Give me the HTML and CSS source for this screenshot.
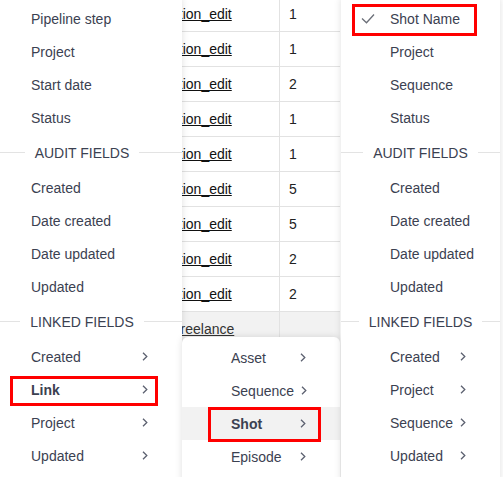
FILE: index.html
```html
<!DOCTYPE html>
<html lang="en">
<head>
<meta charset="utf-8">
<title>Field picker</title>
<link rel="stylesheet" href="styles.css">
</head>
<body>
<div class="stage">
  <div class="table">
    <div class="row"><div class="cell name"><span class="link">production_edit</span></div><div class="cell num">1</div></div>
    <div class="row"><div class="cell name"><span class="link">production_edit</span></div><div class="cell num">1</div></div>
    <div class="row"><div class="cell name"><span class="link">production_edit</span></div><div class="cell num">2</div></div>
    <div class="row"><div class="cell name"><span class="link">production_edit</span></div><div class="cell num">1</div></div>
    <div class="row"><div class="cell name"><span class="link">production_edit</span></div><div class="cell num">1</div></div>
    <div class="row"><div class="cell name"><span class="link">production_edit</span></div><div class="cell num">5</div></div>
    <div class="row"><div class="cell name"><span class="link">production_edit</span></div><div class="cell num">5</div></div>
    <div class="row"><div class="cell name"><span class="link">production_edit</span></div><div class="cell num">2</div></div>
    <div class="row"><div class="cell name"><span class="link">production_edit</span></div><div class="cell num">2</div></div>
    <div class="row group"><div class="cell name"><span class="link">Freelance</span></div><div class="cell num"></div></div>
    <div class="row"><div class="cell name"></div><div class="cell num"></div></div>
    <div class="row"><div class="cell name"></div><div class="cell num"></div></div>
    <div class="row"><div class="cell name"></div><div class="cell num"></div></div>
    <div class="row"><div class="cell name"></div><div class="cell num"></div></div>
  </div>

  <div class="menu menu-main">
    <div class="item"><span class="check"></span><span class="label">Pipeline step</span></div>
    <div class="item"><span class="check"></span><span class="label">Project</span></div>
    <div class="item"><span class="check"></span><span class="label">Start date</span></div>
    <div class="item"><span class="check"></span><span class="label">Status</span></div>
    <div class="section">Audit fields</div>
    <div class="item"><span class="check"></span><span class="label">Created</span></div>
    <div class="item"><span class="check"></span><span class="label">Date created</span></div>
    <div class="item"><span class="check"></span><span class="label">Date updated</span></div>
    <div class="item"><span class="check"></span><span class="label">Updated</span></div>
    <div class="section">Linked fields</div>
    <div class="item"><span class="check"></span><span class="label">Created</span><span class="chev"><svg width="6" height="9" viewBox="0 0 6 9"><path d="M1 .8 4.8 4.5 1 8.2" fill="none" stroke="#5c6170" stroke-width="1.3"/></svg></span></div>
    <div class="item bold"><span class="check"></span><span class="label">Link</span><span class="chev"><svg width="6" height="9" viewBox="0 0 6 9"><path d="M1 .8 4.8 4.5 1 8.2" fill="none" stroke="#5c6170" stroke-width="1.3"/></svg></span></div>
    <div class="item"><span class="check"></span><span class="label">Project</span><span class="chev"><svg width="6" height="9" viewBox="0 0 6 9"><path d="M1 .8 4.8 4.5 1 8.2" fill="none" stroke="#5c6170" stroke-width="1.3"/></svg></span></div>
    <div class="item"><span class="check"></span><span class="label">Updated</span><span class="chev"><svg width="6" height="9" viewBox="0 0 6 9"><path d="M1 .8 4.8 4.5 1 8.2" fill="none" stroke="#5c6170" stroke-width="1.3"/></svg></span></div>
  </div>

  <div class="menu menu-sub">
    <div class="item"><span class="check"></span><span class="label">Asset</span><span class="chev"><svg width="6" height="9" viewBox="0 0 6 9"><path d="M1 .8 4.8 4.5 1 8.2" fill="none" stroke="#5c6170" stroke-width="1.3"/></svg></span></div>
    <div class="item"><span class="check"></span><span class="label">Sequence</span><span class="chev"><svg width="6" height="9" viewBox="0 0 6 9"><path d="M1 .8 4.8 4.5 1 8.2" fill="none" stroke="#5c6170" stroke-width="1.3"/></svg></span></div>
    <div class="item bold active"><span class="check"></span><span class="label">Shot</span><span class="chev"><svg width="6" height="9" viewBox="0 0 6 9"><path d="M1 .8 4.8 4.5 1 8.2" fill="none" stroke="#5c6170" stroke-width="1.3"/></svg></span></div>
    <div class="item"><span class="check"></span><span class="label">Episode</span><span class="chev"><svg width="6" height="9" viewBox="0 0 6 9"><path d="M1 .8 4.8 4.5 1 8.2" fill="none" stroke="#5c6170" stroke-width="1.3"/></svg></span></div>
  </div>

  <div class="menu menu-fields">
    <div class="item"><span class="check"><svg width="14" height="11" viewBox="0 0 14 11"><path d="M1 5.5 5.5 9.8 13 1.5" fill="none" stroke="#6b6f78" stroke-width="1.3"/></svg></span><span class="label">Shot Name</span></div>
    <div class="item"><span class="check"></span><span class="label">Project</span></div>
    <div class="item"><span class="check"></span><span class="label">Sequence</span></div>
    <div class="item"><span class="check"></span><span class="label">Status</span></div>
    <div class="section">Audit fields</div>
    <div class="item"><span class="check"></span><span class="label">Created</span></div>
    <div class="item"><span class="check"></span><span class="label">Date created</span></div>
    <div class="item"><span class="check"></span><span class="label">Date updated</span></div>
    <div class="item"><span class="check"></span><span class="label">Updated</span></div>
    <div class="section">Linked fields</div>
    <div class="item"><span class="check"></span><span class="label">Created</span><span class="chev"><svg width="6" height="9" viewBox="0 0 6 9"><path d="M1 .8 4.8 4.5 1 8.2" fill="none" stroke="#5c6170" stroke-width="1.3"/></svg></span></div>
    <div class="item"><span class="check"></span><span class="label">Project</span><span class="chev"><svg width="6" height="9" viewBox="0 0 6 9"><path d="M1 .8 4.8 4.5 1 8.2" fill="none" stroke="#5c6170" stroke-width="1.3"/></svg></span></div>
    <div class="item"><span class="check"></span><span class="label">Sequence</span><span class="chev"><svg width="6" height="9" viewBox="0 0 6 9"><path d="M1 .8 4.8 4.5 1 8.2" fill="none" stroke="#5c6170" stroke-width="1.3"/></svg></span></div>
    <div class="item"><span class="check"></span><span class="label">Updated</span><span class="chev"><svg width="6" height="9" viewBox="0 0 6 9"><path d="M1 .8 4.8 4.5 1 8.2" fill="none" stroke="#5c6170" stroke-width="1.3"/></svg></span></div>
  </div>

  <div class="mark mark-link"></div>
  <div class="mark mark-shot"></div>
  <div class="mark mark-name"></div>
</div>
</body>
</html>
```

FILE: styles.css
```css
* { box-sizing: border-box; }
html, body { margin: 0; padding: 0; background: #fff; }
body {
  font-family: "Liberation Sans", Arial, sans-serif;
  font-size: 14px;
  color: #3b4151;
}
.stage {
  position: relative;
  width: 503px;
  height: 477px;
  overflow: hidden;
}

/* background table */
.table { margin-top: -3px; width: 340px; }
.row {
  display: grid;
  grid-template-columns: 280px 60px;
  height: 35px;
  border-bottom: 1px solid #e2e2e2;
}
.cell {
  display: flex;
  align-items: center;
  white-space: nowrap;
  overflow: hidden;
}
.cell.name { border-right: 1px solid #e2e2e2; padding-left: 136px; }
.cell.num { padding-left: 9px; color: #222; }
.link { color: #111; text-decoration: underline; }
.row.group { background: #f2f2f2; }
.row.group .name { padding-left: 172px; }
.row.group .link { color: #333; }

/* menus */
.menu {
  position: absolute;
  background: #fff;
  padding: 4px 0;
  box-shadow: 0 0 7px rgba(0, 0, 0, 0.13);
}
.menu-main { left: -18px; top: -2px; width: 200px; height: 484px; }
.menu-sub { left: 182px; top: 337px; width: 158px; height: 150px; border-radius: 6px; }
.menu-fields { left: 341px; top: -2px; width: 159px; height: 484px; }

.item {
  display: flex;
  align-items: center;
  height: 33px;
  padding: 0 34px 0 20px;
  white-space: nowrap;
}
.check { width: 29px; flex: none; display: flex; align-items: center; }
.chev { margin-left: auto; padding-left: 7px; display: flex; align-items: center; }
.item.bold { font-weight: 700; }
.item.active { background: #f2f2f2; }

.section {
  display: flex;
  align-items: center;
  gap: 10px;
  height: 37px;
  text-transform: uppercase;
  white-space: nowrap;
}
.section::before, .section::after {
  content: "";
  flex: 1;
  height: 1px;
  background: #e3e3e3;
}

/* annotation boxes */
.mark { position: absolute; border: 3px solid #ff0000; }
.mark-link { left: 10px; top: 376px; width: 148px; height: 30px; }
.mark-shot { left: 208px; top: 407px; width: 113px; height: 35px; }
.mark-name { left: 352px; top: 4px; width: 125px; height: 32px; }
```
